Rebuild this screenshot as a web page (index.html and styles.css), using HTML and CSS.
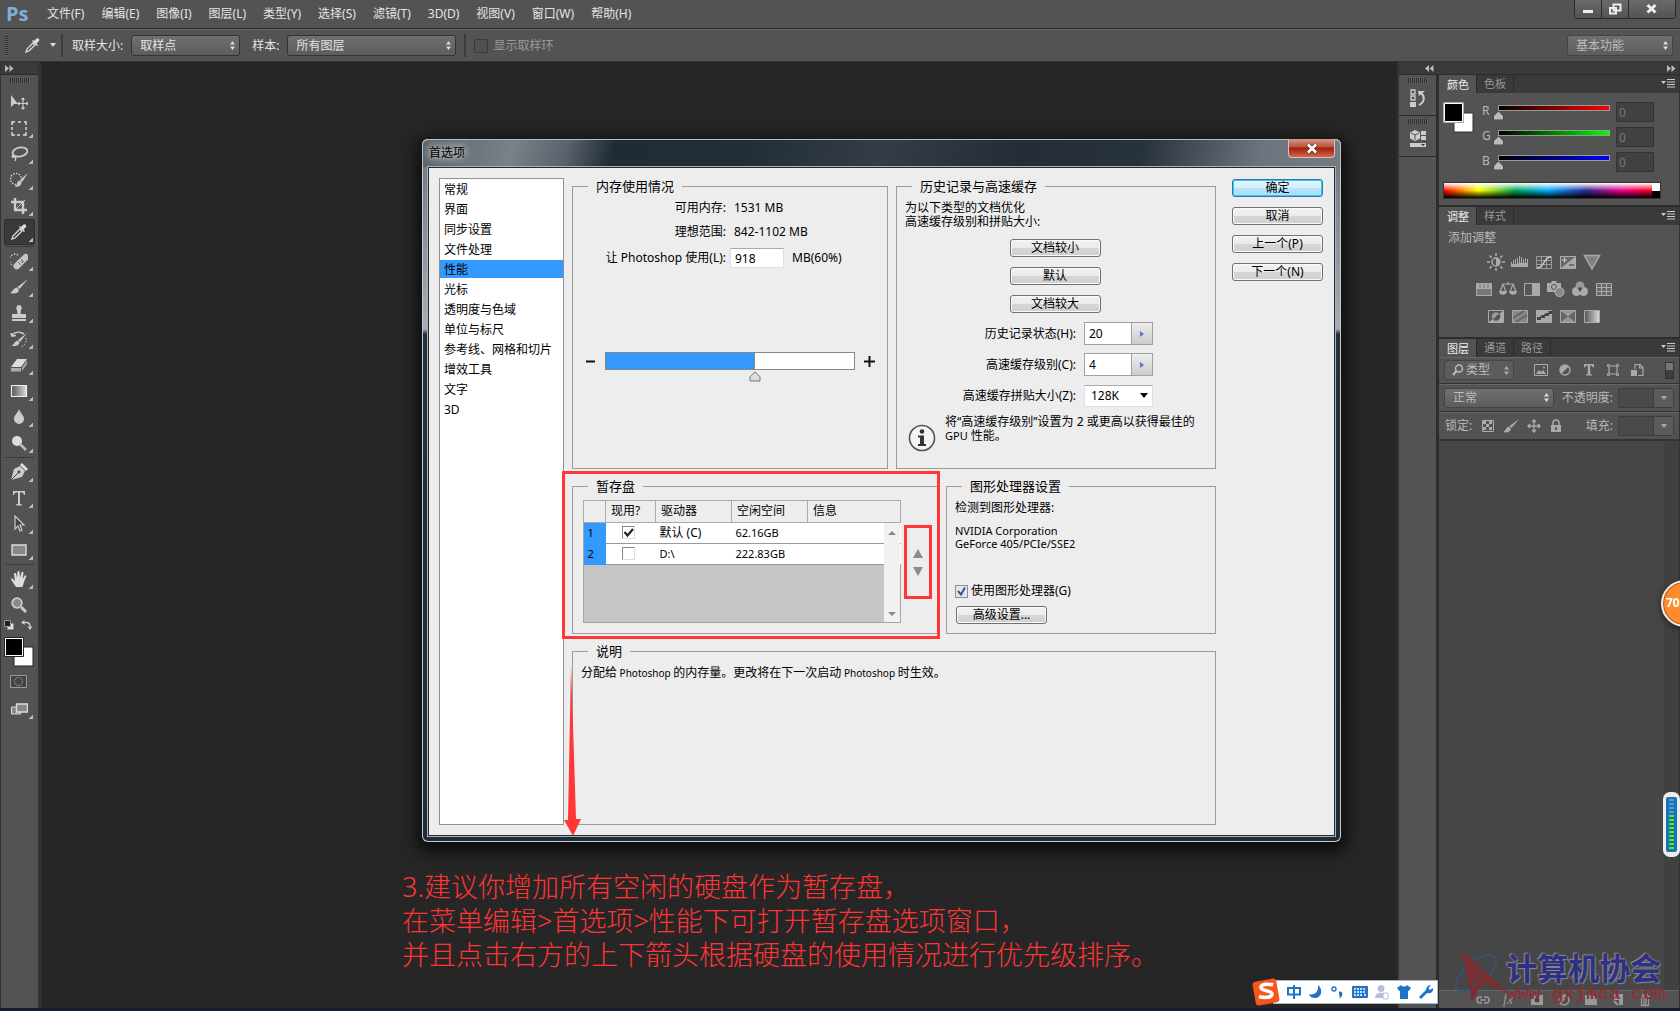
FILE: index.html
```html
<!DOCTYPE html>
<html lang="zh-CN">
<head>
<meta charset="utf-8">
<title>首选项</title>
<link rel="stylesheet" href="styles.css">
</head>
<body>
<div class="app">
  <header class="menubar">
    <span class="brand">Ps</span>
    <nav class="menus">
      <button>文件(F)</button><button>编辑(E)</button><button>图像(I)</button><button>图层(L)</button><button>类型(Y)</button><button>选择(S)</button><button>滤镜(T)</button><button>3D(D)</button><button>视图(V)</button><button>窗口(W)</button><button>帮助(H)</button>
    </nav>
    <div class="winctl">
      <button aria-label="最小化"><svg width="12" height="12"><path d="M1 7h10v3H1z" fill="#eee"/></svg></button>
      <button aria-label="还原"><svg width="14" height="12"><path d="M5.500 1.500h7v6h-7z M2 5h6v5.500H2z" fill="#5a5a5a" stroke="#eee" stroke-width="2"/></svg></button>
      <button class="wide" aria-label="关闭"><svg width="12" height="12"><path d="M1.500 2l8 7.500M9.500 2l-8 7.500" stroke="#eee" stroke-width="3"/></svg></button>
    </div>
  </header>

  <div class="optbar">
    <i class="grip-v"></i>
    <svg class="opt-tool" width="18" height="18" viewBox="0 0 18 18"><path d="M3 15l1-3 6-6 2 2-6 6z" fill="none" stroke="#ddd" stroke-width="1.300"/><path d="M9 4l5 5 1-1-1.500-1.500L16 4a1.800 1.800 0 0 0-2.500-2.500L11 4 10 3z" fill="#ddd"/></svg>
    <svg class="opt-caret" width="7" height="5"><path d="M1 0h6L4 4z" fill="#ddd"/></svg>
    <i class="vsep"></i>
    <label for="s1">取样大小:</label>
    <select id="s1" class="sel sel-size"><option>取样点</option></select>
    <label for="s2">样本:</label>
    <select id="s2" class="sel sel-layers"><option>所有图层</option></select>
    <i class="vsep"></i>
    <label class="ring"><input type="checkbox" class="darkcheck">显示取样环</label>
    <select class="sel sel-ws" aria-label="工作区"><option>基本功能</option></select>
  </div>

  <div class="work">
    <aside class="toolbar">
      <div class="strip"><svg width="9" height="7"><path d="M0 0l4 3.500L0 7zM4.500 0l4 3.500-4 3.500z" fill="#bbb"/></svg></div>
      <i class="grip"></i>
      <div class="tools">
        <button class="tool" aria-label="移动"><svg viewBox="0 0 18 18"><path d="M1 2v12l3-3h4z" fill="#ccc"/><path d="M13 5v11M8 10.500h10M11.500 6.500L13 5l1.500 1.500M11.500 14.500L13 16l1.500-1.500M9.500 9L8 10.500 9.500 12M16.500 9l1.500 1.500-1.500 1.500" fill="none" stroke="#ccc" stroke-width="1.200"/></svg></button>
        <button class="tool more" aria-label="选框"><svg viewBox="0 0 18 18"><path d="M2 6V3h3M8 3h3M14 3h2v3M16 8v3M16 13v3h-3M10 16H7M5 16H2v-3M2 11V8" fill="none" stroke="#ddd" stroke-width="1.400"/></svg></button>
        <button class="tool more" aria-label="套索"><svg viewBox="0 0 18 18"><ellipse cx="10" cy="7" rx="7.500" ry="4.500" transform="rotate(-12 10 7)" fill="none" stroke="#ccc" stroke-width="1.800"/><path d="M4 10c-3 1-2 3 0 2s2 2 1 4" fill="none" stroke="#ccc" stroke-width="1.400"/></svg></button>
        <button class="tool more" aria-label="快速选择"><svg viewBox="0 0 18 18"><circle cx="6" cy="8" r="5.500" fill="none" stroke="#ddd" stroke-width="1.400" stroke-dasharray="1.300 1.500"/><path d="M18 2l-6 9-2-2zM9.500 9.500l2 2c0 3-3 5-7 4 3-1 2-5 5-6z" fill="#ccc"/></svg></button>
        <button class="tool more" aria-label="裁剪"><svg viewBox="0 0 18 18"><path d="M5 1v12h12M1 5h12v12" fill="none" stroke="#ccc" stroke-width="2.400"/><path d="M5 13L15 3" stroke="#ccc" stroke-width="1"/></svg></button>
        <button class="tool more on" aria-label="吸管"><svg viewBox="0 0 18 18"><path d="M2 16l1-3 7-7 2 2-7 7z" fill="none" stroke="#ddd" stroke-width="1.300"/><path d="M9 4l5 5 1-1-1.500-1.500L16 4a1.800 1.800 0 0 0-2.500-2.500L11 4 10 3z" fill="#ddd"/></svg></button>
        <hr>
        <button class="tool more" aria-label="修复画笔"><svg viewBox="0 0 18 18"><path d="M8 3a5.500 5.500 0 0 0-6 10" fill="none" stroke="#ddd" stroke-width="1.400" stroke-dasharray="1.300 1.500"/><rect x="1.500" y="6.500" width="19" height="6.500" rx="3.200" transform="rotate(-45 11 9.500)" fill="#c6c6c6"/><path d="M8 10l3 3M11 7l3 3" stroke="#777"/><path d="M10.500 10h1M11.500 8.500h1M12 10.500h1" stroke="#555"/></svg></button>
        <button class="tool more" aria-label="画笔"><svg viewBox="0 0 18 18"><path d="M18 1L9.500 11 7.500 9zM7 9.500l2 2.500c-1 4-5 4-9 3 3-1 3-5 7-5.500z" fill="#ccc"/></svg></button>
        <button class="tool more" aria-label="图章"><svg viewBox="0 0 18 18"><path d="M9 1a3 3 0 0 1 2 5l-.5 4H16v4H2v-4h5.500L7 6a3 3 0 0 1 2-5zM2 15h14v2H2z" fill="#ccc"/></svg></button>
        <button class="tool more" aria-label="历史记录画笔"><svg viewBox="0 0 18 18"><path d="M2 5c4-4 9-3 12-1M1 3l1 3 4-.5" fill="none" stroke="#ccc" stroke-width="1.600"/><path d="M17 3l-7 9-2-2zM7.500 10.500l2 2c-1 4-5 4-8 3 3-1 3-4 6-5z" fill="#ccc"/><path d="M16 8c1 4-1 7-5 9" fill="none" stroke="#ccc" stroke-dasharray="1.500 1.500"/></svg></button>
        <button class="tool more" aria-label="橡皮擦"><svg viewBox="0 0 18 18"><path d="M7 3h10l-6 8H1z" fill="#ddd"/><path d="M1 12h10v3.500H1zM12 11.500l5-7V8l-5 7z" fill="#aaa"/></svg></button>
        <button class="tool more" aria-label="渐变"><svg viewBox="0 0 18 18"><defs><linearGradient id="g"><stop stop-color="#555"/><stop offset="1" stop-color="#ddd"/></linearGradient></defs><path d="M1.500 3.500h15v11h-15z" fill="url(#g)" stroke="#eee" stroke-width="1.200"/></svg></button>
        <button class="tool more" aria-label="模糊"><svg viewBox="0 0 18 18"><path d="M9 1c1 4 5 6 5 10a5 5 0 0 1-10 0c0-4 4-6 5-10z" fill="#ccc"/></svg></button>
        <button class="tool more" aria-label="减淡"><svg viewBox="0 0 18 18"><circle cx="7" cy="7" r="5" fill="#ddd"/><path d="M10 10l6 6" stroke="#bbb" stroke-width="2.600"/></svg></button>
        <hr>
        <button class="tool more" aria-label="钢笔"><svg viewBox="0 0 18 18"><path d="M12 0l6 6-2 2-6-6z" fill="#ddd"/><path d="M10 3l5 5-3 6-11 3 3-11z" fill="#ccc"/><path d="M1 17l7-7" stroke="#444"/><circle cx="9" cy="9" r="1.400" fill="#444"/></svg></button>
        <button class="tool more" aria-label="文字"><svg viewBox="0 0 18 18"><path d="M3 2h12v4h-1c-.5-2-1-2.500-4-2.500V15l2 .5v1H6v-1L8 15V3.500C5 3.500 4.500 4 4 6H3z" fill="#ccc"/></svg></button>
        <button class="tool more" aria-label="路径选择"><svg viewBox="0 0 18 18"><path d="M5 1v13l3-3 2 5 2-1-2-5h4z" fill="#444" stroke="#ccc" stroke-width="1.200"/></svg></button>
        <button class="tool more" aria-label="矩形"><svg viewBox="0 0 18 18"><path d="M2 4h14v10H2z" fill="#888" stroke="#ddd" stroke-width="1.400"/></svg></button>
        <hr>
        <button class="tool more" aria-label="抓手"><svg viewBox="0 0 18 18"><path d="M6 17L1 9.500c0-1.500 1.500-1.500 2.500 0L5 11 4 4c0-1.500 2-1.500 2.200 0L7 8l.5-6c0-1.500 2-1.500 2 0L10 8l1.500-5.500c.5-1.300 2-1 2 .5L12.500 9l2-3c1-1.200 2-.5 1.700.5L14 12l-1.500 5z" fill="#ddd"/></svg></button>
        <button class="tool" aria-label="缩放"><svg viewBox="0 0 18 18"><circle cx="7" cy="7" r="4.800" fill="#888" stroke="#ccc" stroke-width="1.800"/><path d="M11 11l5 5" stroke="#ccc" stroke-width="3"/></svg></button>
      </div>
      <div class="mini"><svg width="10" height="10"><path d="M3.500 3.500h6v6h-6z" fill="#ddd"/><path d="M.5.5h6v6h-6z" fill="#222" stroke="#999"/></svg><svg width="11" height="11"><path d="M3 2.500h2c3 0 4 1 4 4" fill="none" stroke="#ccc" stroke-width="1.500"/><path d="M0 2.500L3.500 0v5zM6.500 6.500h5L9 10z" fill="#ccc"/></svg></div>
      <svg class="fgbg" width="30" height="30"><path d="M10 10h19v19H10z" fill="#fff" stroke="#222"/><path d="M.5.5h19v19H.5z" fill="#fff" stroke="#222"/><path d="M2 2h16v16H2z"/></svg>
      <svg class="mask" width="18" height="14"><path d="M.5.5h16v12H.5z" fill="#444" stroke="#999"/><circle cx="8.500" cy="6.500" r="4" fill="none" stroke="#bbb" stroke-dasharray="1 1"/></svg>
      <button class="tool more" aria-label="屏幕模式"><svg viewBox="0 0 18 18"><path d="M1.500 7h9v7h-9z" fill="#888" stroke="#ddd"/><path d="M6.500 4h11v8h-11z" fill="#888" stroke="#ddd" stroke-width="1.400"/></svg></button>
    </aside>

    <main class="canvas"></main>

    <aside class="dock">
      <div class="strip split"><svg width="9" height="7"><path d="M4 0L0 3.500 4 7zM8.500 0l-4 3.500 4 3.500z" fill="#bbb"/></svg><svg width="9" height="7"><path d="M0 0l4 3.500L0 7zM4.500 0l4 3.500-4 3.500z" fill="#bbb"/></svg></div>
      <div class="dockcols">
        <div class="iconcol">
          <div class="iconcell"><i class="grip"></i><svg width="16" height="18"><path d="M1 1h4v4H1zM1 7h4v4H1z" fill="none" stroke="#ccc" stroke-width="1.300"/><path d="M0 13h6v5H0zM8 2h7l-6 5z" fill="#ccc"/><path d="M11 4c4 3 4 9-2 12" fill="none" stroke="#ccc" stroke-width="2"/></svg></div>
          <div class="iconcell"><i class="grip"></i><svg width="16" height="18"><path d="M5 0l5 2.500v6L5 11 0 8.500v-6z" fill="#ccc"/><path d="M1 3l4 2 4-2M5 5v5" fill="none" stroke="#555"/><path d="M11 1h5v4h-5zM11 6h5v4h-5zM0 13h16v4H0z" fill="#ccc"/><path d="M11 14h4l-2 2z" fill="#333"/></svg></div>
        </div>
        <div class="panels">
          <section class="panel">
            <div class="tabs"><button class="tab on">颜色</button><button class="tab">色板</button><svg class="pm" width="14" height="9"><path d="M0 2h5L2.500 5z" fill="#ccc"/><path d="M6 .5h8M6 3h8M6 5.500h8M6 8h8" stroke="#ccc"/></svg></div>
            <div class="color">
              <svg width="31" height="31"><path d="M11 11h19v19H11z" fill="#fff" stroke="#333"/><path d="M.5.5h20v20H.5z" stroke="#aaa"/><path d="M1.500 1.500h18v18h-18z" stroke="#fff"/></svg>
              <div class="rgb">
                <div class="ch"><label for="r">R</label><span class="track"><i class="red"></i><svg width="11" height="9"><path d="M5.500 0L10.500 5v4H.5V5z" fill="#bbb" stroke="#444"/></svg></span><input id="r" value="0"></div>
                <div class="ch"><label for="gg">G</label><span class="track"><i class="green"></i><svg width="11" height="9"><path d="M5.500 0L10.500 5v4H.5V5z" fill="#bbb" stroke="#444"/></svg></span><input id="gg" value="0"></div>
                <div class="ch"><label for="b">B</label><span class="track"><i class="blue"></i><svg width="11" height="9"><path d="M5.500 0L10.500 5v4H.5V5z" fill="#bbb" stroke="#444"/></svg></span><input id="b" value="0"></div>
              </div>
            </div>
            <div class="spectrum"><i></i></div>
          </section>

          <section class="panel">
            <div class="tabs"><button class="tab on">调整</button><button class="tab">样式</button><svg class="pm" width="14" height="9"><path d="M0 2h5L2.500 5z" fill="#ccc"/><path d="M6 .5h8M6 3h8M6 5.500h8M6 8h8" stroke="#ccc"/></svg></div>
            <div class="adj">
              <p>添加调整</p>
              <div class="adjrow">
                <svg width="18" height="18"><circle cx="9" cy="9" r="4" fill="none" stroke="#aaa" stroke-width="1.500"/><path d="M9 5a4 4 0 0 1 0 8z" fill="#aaa"/><path d="M9 0v3M9 15v3M0 9h3M15 9h3M2.600 2.600l2 2M13.400 13.400l2 2M2.600 15.400l2-2M13.400 4.600l2-2" stroke="#aaa" stroke-width="1.600"/></svg>
                <svg width="18" height="18"><path d="M0 9h1v2h1V7h1v4h1V6h1v5h1V5h1v5h1V3h1v7h1V4h1v6h1V6h1v4h1V5h1v5h1V6h1v8H0z" fill="#aaa"/></svg>
                <svg width="18" height="18"><path d="M1.500 3.500h15v12h-15zM6.500 3v12M11.500 3v12M1 7.500h15M1 11.500h15" fill="none" stroke="#999"/><path d="M2 15c8 0 6-11 14-11" fill="none" stroke="#ccc" stroke-width="1.500"/></svg>
                <svg width="18" height="18"><path d="M1 3h16v13H1z" fill="#aaa"/><path d="M2 15V4h14z" fill="#666"/><path d="M3 7h5M5.500 4.500v5" stroke="#ccc"/><path d="M10 12h5" stroke="#333"/></svg>
                <svg width="18" height="18"><path d="M1.500 2.500h15L9 16z" fill="#808080" stroke="#aaa" stroke-width="1.500"/></svg>
              </div>
              <div class="adjrow">
                <svg width="18" height="18"><path d="M1.500 3.500h15v12h-15z" fill="#777" stroke="#aaa"/><path d="M2 4h14v5H2z" fill="#aaa"/><path d="M5 4v4M9 4v4M13 4v4" stroke="#777"/></svg>
                <svg width="18" height="18"><path d="M3 4h12M9 2v3M4 4l-3 8M4 4l3 8M14 4l-3 8M14 4l3 8" fill="none" stroke="#aaa" stroke-width="1.200"/><path d="M0 11h8c0 5-8 5-8 0zM10 11h8c0 5-8 5-8 0z" fill="#aaa"/></svg>
                <svg width="18" height="18"><path d="M1.500 3.500h15v12h-15z" fill="#555" stroke="#aaa"/><path d="M9 4h7v11H9z" fill="#aaa"/></svg>
                <svg width="18" height="18"><path d="M0 3h4l1-2h4l1 2h4v9H0z" fill="#aaa"/><circle cx="7" cy="7" r="2.500" fill="none" stroke="#555"/><circle cx="12.500" cy="12" r="4.500" fill="#888" stroke="#bbb"/></svg>
                <svg width="18" height="18"><circle cx="9" cy="6" r="4.500" fill="#999"/><circle cx="5.500" cy="11.500" r="4.500" fill="#aaa"/><circle cx="12.500" cy="11.500" r="4.500" fill="#aaa"/><path d="M9 12l-2.500-4.500h5z" fill="#444"/></svg>
                <svg width="18" height="18"><path d="M1.500 3.500h15v12h-15zM6.500 3v12M11.500 3v12M1 7.500h15M1 11.500h15" fill="#666" stroke="#aaa"/></svg>
              </div>
              <div class="adjrow">
                <svg width="18" height="18"><path d="M1.500 3.500h15v12h-15z" fill="#555" stroke="#aaa"/><path d="M2 15L16 4v11z" fill="#aaa"/><circle cx="9" cy="9.500" r="4.200" fill="#999"/><path d="M6 12.500l6-6a4.200 4.200 0 0 1-6 6z" fill="#555"/></svg>
                <svg width="18" height="18"><path d="M1.500 3.500h15v12h-15z" fill="#888" stroke="#aaa"/><path d="M2 11l11-7M5 15l11-7" stroke="#666" stroke-width="2"/></svg>
                <svg width="18" height="18"><path d="M1.500 3.500h15v12h-15z" fill="#aaa" stroke="#aaa"/><path d="M2 10h3V8h4V6h4V4h4v3h-3v2h-4v2H6v2H2z" fill="#444"/><path d="M3 9h3V7h4V5h4" fill="none" stroke="#aaa"/></svg>
                <svg width="18" height="18"><path d="M1.500 3.500h15v12h-15z" fill="#999" stroke="#aaa"/><path d="M2 4l7 5.500L2 15zM16 4L9 9.500l7 5.500z" fill="#666"/></svg>
                <svg width="18" height="18"><path d="M1.500 3.500h15v12h-15z" fill="url(#g)" stroke="#aaa"/></svg>
              </div>
            </div>
          </section>

          <section class="panel layers">
            <div class="tabs"><button class="tab on">图层</button><button class="tab">通道</button><button class="tab">路径</button><svg class="pm" width="14" height="9"><path d="M0 2h5L2.500 5z" fill="#ccc"/><path d="M6 .5h8M6 3h8M6 5.500h8M6 8h8" stroke="#ccc"/></svg></div>
            <div class="lrow filter">
              <select class="sel sel-kind" aria-label="筛选"><option>类型</option></select>
              <div class="ficons">
                <svg width="14" height="14"><path d="M.5 1.500h13v11H.5z" fill="none" stroke="#aaa"/><path d="M2 11l3-4 2 2 2-2 3 4z" fill="#aaa"/><circle cx="10" cy="4.500" r="1" fill="#aaa"/></svg>
                <svg width="14" height="14"><circle cx="7" cy="7" r="5" fill="none" stroke="#aaa" stroke-width="1.400"/><path d="M10.500 3.500a5 5 0 0 0-7 7z" fill="#aaa"/></svg>
                <svg width="14" height="14"><path d="M2 1h10v3.500h-1C10.500 3 10 2.500 8.200 2.500V11l1.800.5v1H4v-1l1.800-.5V2.500C4 2.500 3.500 3 3 4.500H2z" fill="#aaa"/></svg>
                <svg width="14" height="14"><path d="M3 3h8v8H3z" fill="none" stroke="#aaa" stroke-width="1.200"/><path d="M1.500 1.500h2v2h-2zM10.500 1.500h2v2h-2zM1.500 10.500h2v2h-2zM10.500 10.500h2v2h-2z" fill="#555" stroke="#aaa"/></svg>
                <svg width="14" height="14"><path d="M5 1.500h5l3 3v8H8M5 1v5M9.500 2v3H13" fill="none" stroke="#aaa" stroke-width="1.200"/><path d="M1 7h6v6H1z" fill="#aaa"/></svg>
              </div>
              <i class="toggle"></i>
            </div>
            <div class="lrow">
              <select class="sel sel-mode" aria-label="混合模式"><option>正常</option></select>
              <label for="op">不透明度:</label><span class="combo"><input id="op"><button aria-label="不透明度"></button></span>
            </div>
            <div class="lrow">
              <span class="lk">锁定:</span>
              <div class="locks">
                <svg width="14" height="14"><path d="M1.500 1.500h11v11h-11z" fill="#555" stroke="#aaa"/><path d="M2 2h3v3H2zM8 2h3v3H8zM5 5h3v3H5zM2 8h3v3H2zM8 8h3v3H8z" fill="#aaa"/></svg>
                <svg width="16" height="14"><path d="M16 0L8.500 9l-2-2zM6 7.500L8 10c-1 3-4 4-8 3 3-1 3-5 6-5.500z" fill="#aaa"/></svg>
                <svg width="14" height="14"><path d="M7 1v12M1 7h12M5 3l2-2 2 2M5 11l2 2 2-2M3 5L1 7l2 2M11 5l2 2-2 2" fill="none" stroke="#aaa" stroke-width="1.300"/></svg>
                <svg width="14" height="14"><path d="M2 6h10v7H2z" fill="#aaa"/><path d="M4 6V4c0-4 6-4 6 0v2" fill="none" stroke="#aaa" stroke-width="1.500"/><path d="M7 8v3" stroke="#444" stroke-width="1.500"/></svg>
              </div>
              <label for="fi">填充:</label><span class="combo"><input id="fi"><button aria-label="填充"></button></span>
            </div>
            <div class="llist"><i></i></div>
            <div class="lfoot">
              <svg width="14" height="14"><path d="M6 4H4a3 3 0 0 0 0 6h2M8 4h2a3 3 0 0 1 0 6H8M4 7h6" fill="none" stroke="#999" stroke-width="1.600"/></svg>
              <em>fx</em>
              <svg width="14" height="14"><path d="M1 2h12v10H1z" fill="#999"/><circle cx="7" cy="7" r="2.500" fill="#444"/></svg>
              <svg width="14" height="14"><circle cx="7" cy="7" r="5" fill="none" stroke="#999" stroke-width="1.500"/><path d="M10.500 3.500a5 5 0 0 0-7 7z" fill="#999"/></svg>
              <svg width="14" height="14"><path d="M1 2h5l1 1h6v9H1z" fill="#999"/></svg>
              <svg width="14" height="14"><path d="M3 1h9v11H8V7H3z" fill="#999"/><path d="M3 8l4 4" stroke="#999" stroke-width="2"/></svg>
              <svg width="14" height="14"><path d="M2 3.500h10M5 3V1.500h4V3M3.500 5v7.500h7V5M6 5v7M8 5v7" fill="none" stroke="#999" stroke-width="1.300"/></svg>
            </div>
          </section>
        </div>
      </div>
    </aside>
  </div>
  <footer class="edge"></footer>
</div>

<div class="dialog" role="dialog" aria-labelledby="dt">
  <div class="titlebar"><h1 id="dt">首选项</h1><button class="close" aria-label="关闭"><svg width="12" height="11"><path d="M2 1.500l8 8M10 1.500l-8 8" stroke="#633" stroke-width="4"/><path d="M2 1.500l8 8M10 1.500l-8 8" stroke="#fff" stroke-width="2.600"/></svg></button></div>
  <div class="client">
    <ul class="cats"><li>常规</li><li>界面</li><li>同步设置</li><li>文件处理</li><li class="on">性能</li><li>光标</li><li>透明度与色域</li><li>单位与标尺</li><li>参考线、网格和切片</li><li>增效工具</li><li>文字</li><li>3D</li></ul>
    <div class="groups">
      <div class="grow first">
        <fieldset class="mem"><legend>内存使用情况</legend>
          <div class="mrow"><span>可用内存:</span><b>1531 MB</b></div>
          <div class="mrow"><span>理想范围:</span><b>842-1102 MB</b></div>
          <div class="mrow use"><label for="mb">让 Photoshop 使用(L):</label><input id="mb" value="918"><span class="unit">MB(60%)</span></div>
          <div class="slide"><svg width="11" height="11"><path d="M1 5.500h9" stroke="#111" stroke-width="2"/></svg>
            <div class="bar"><i style="width:60%"></i><svg width="12" height="11"><path d="M6 .8l5 5V10H1V5.800z" fill="#ddd" stroke="#777"/></svg></div>
            <svg width="11" height="11"><path d="M0 5.500h11M5.500 0v11" stroke="#111" stroke-width="2"/></svg></div>
        </fieldset>
        <fieldset class="hist"><legend>历史记录与高速缓存</legend>
          <p class="lead">为以下类型的文档优化<br>高速缓存级别和拼贴大小:</p>
          <div class="presets"><button class="btn">文档较小</button><button class="btn">默认</button><button class="btn">文档较大</button></div>
          <div class="hrow"><label for="hs">历史记录状态(H):</label><span class="step"><input id="hs" value="20"><button aria-label="状态"></button></span></div>
          <div class="hrow"><label for="hc">高速缓存级别(C):</label><span class="step"><input id="hc" value="4"><button aria-label="级别"></button></span></div>
          <div class="hrow"><label for="ht">高速缓存拼贴大小(Z):</label><select id="ht"><option>128K</option></select></div>
          <div class="info"><svg width="28" height="28"><circle cx="14" cy="14" r="12.500" fill="#f4f4f4" stroke="#555" stroke-width="1.600"/><circle cx="14" cy="7.500" r="2.300" fill="#333"/><path d="M10 11.500h6V20h2v2h-8v-2h2v-6.500h-2z" fill="#333"/></svg><p>将“高速缓存级别”设置为 2 或更高以获得最佳的<br><small>GPU</small> 性能。</p></div>
        </fieldset>
      </div>
      <div class="grow second">
        <fieldset class="scratch"><legend>暂存盘</legend>
          <div class="disk">
            <div class="tablebox">
              <table>
                <colgroup><col class="c0"><col class="c1"><col class="c2"><col class="c3"><col></colgroup>
                <thead><tr><th></th><th>现用?</th><th>驱动器</th><th>空闲空间</th><th>信息</th></tr></thead>
                <tbody>
                  <tr><td class="n">1</td><td class="ck"><input type="checkbox" checked aria-label="默认 (C)"></td><td>默认 (C)</td><td><small>62.16GB</small></td><td></td></tr>
                  <tr><td class="n">2</td><td class="ck"><input type="checkbox" aria-label="D:\"></td><td><small>D:\</small></td><td><small>222.83GB</small></td><td></td></tr>
                </tbody>
              </table>
              <div class="sbar"><svg width="8" height="4"><path d="M0 4l4-4 4 4z" fill="#888"/></svg><svg width="8" height="4"><path d="M0 0h8L4 4z" fill="#888"/></svg></div>
            </div>
            <div class="order"><button aria-label="上移"><svg width="10" height="9"><path d="M0 9l5-9 5 9z" fill="#8c8c8c"/></svg></button><button aria-label="下移"><svg width="10" height="9"><path d="M0 0h10L5 9z" fill="#8c8c8c"/></svg></button></div>
          </div>
        </fieldset>
        <fieldset class="gpu"><legend>图形处理器设置</legend>
          <p>检测到图形处理器:</p>
          <p class="card">NVIDIA Corporation<br>GeForce 405/PCIe/SSE2</p>
          <label class="usegpu"><input type="checkbox" checked>使用图形处理器(G)</label>
          <button class="btn">高级设置...</button>
        </fieldset>
      </div>
      <fieldset class="desc"><legend>说明</legend><p>分配给<small> Photoshop </small>的内存量。更改将在下一次启动<small> Photoshop </small>时生效。</p></fieldset>
    </div>
    <div class="actions"><button class="btn ok">确定</button><button class="btn">取消</button><button class="btn">上一个(P)</button><button class="btn">下一个(N)</button></div>
  </div>
  <i class="mark outer"></i>
  <svg class="arrow" width="17" height="171"><path d="M7 0l2 60 3 94h5l-8 17-9-16h4z" fill="#ff3737"/></svg>
</div>

<p class="note">3.建议你增加所有空闲的硬盘作为暂存盘，<br>在菜单编辑&gt;首选项&gt;性能下可打开暂存盘选项窗口，<br>并且点击右方的上下箭头根据硬盘的使用情况进行优先级排序。</p>

<div class="ball">70</div>
<div class="meter"><i></i></div>

<div class="ime">
  <svg class="sogou" width="30" height="30" viewBox="0 0 30 30"><rect x="3" y="3" width="24" height="24" rx="3" transform="rotate(-10 15 15)" fill="#f8551c"/><path d="M22 8c-5-1.500-12-1-12 2.500 0 4 11 2.500 11 6.500 0 4-8 4-13 2.500" fill="none" stroke="#fff" stroke-width="3.600"/></svg>
  <svg width="16" height="16"><path d="M2 4h12v6.500H2zM8 1v14" fill="none" stroke="#1f74c8" stroke-width="2"/></svg>
  <svg width="16" height="16"><path d="M10 1c6 5 3 13-3 13-3 0-5-1-6-4 5 2 10-2 9-9z" fill="#1f74c8"/></svg>
  <svg width="16" height="16"><circle cx="4" cy="5" r="2" fill="none" stroke="#1f74c8" stroke-width="1.400"/><path d="M9 8c4-2 5 4 0 7 1-2 1-3 0-4z" fill="#1f74c8"/></svg>
  <svg width="16" height="16"><rect y="2" width="16" height="12" rx="1" fill="#1f74c8"/><path d="M2 5h12M2 8h12M2 11h2M5 11h6M12 11h2" stroke="#fff" stroke-width="1.500" stroke-dasharray="2 1"/></svg>
  <svg width="16" height="16"><circle cx="7" cy="4.500" r="3.500" fill="#b5c0d8"/><path d="M1 14c0-7 12-7 12 0z" fill="#b5c0d8"/><path d="M9 9h5v6H9z" fill="#fff" stroke="#b5c0d8"/></svg>
  <svg width="16" height="16"><path d="M5 1c1 2 5 2 6 0l4 3-2 3-1-.5V15H4V6.500L3 7 1 4z" fill="#1f74c8"/></svg>
  <svg width="16" height="16"><path d="M2 14l7-7" stroke="#1f74c8" stroke-width="3"/><path d="M13 1l-2.500 3 1.500 2 3-2c1 4-3 6-6 5-2-2-1-8 4-8z" fill="#1f74c8"/></svg>
</div>

<div class="wm">
  <svg width="56" height="56" viewBox="0 0 56 56"><ellipse cx="23" cy="24" rx="25" ry="11" transform="rotate(-40 23 24)" fill="none" stroke="#35547a" stroke-width="1.500"/><path d="M9 1l45 42-25-9-10 19-2-12z" fill="#7a2e31"/><path d="M17 42l13-20" stroke="#484848" stroke-width="2"/></svg>
  <div><strong>计算机协会</strong><a href="#">www.gxjmca.com</a></div>
</div>
</body>
</html>
```
FILE: styles.css
```css
* { box-sizing: border-box; }
body {
  margin: 0;
  height: 100vh;
  position: relative;
  overflow: hidden;
  background: #262626;
  color: #e4e4e4;
  font: 12px/16px "Noto Sans", "Noto Sans CJK SC", sans-serif;
}
button, input, select { font: inherit; color: inherit; margin: 0; }
button { padding: 0; border: 0; background: none; }
p, h1, ul { margin: 0; padding: 0; }
svg { display: block; flex: none; }
small { font-size: 11px; }

.app { display: grid; grid-template-rows: 29px 33px 1fr 3px; height: 100vh; }
.menubar { display: flex; align-items: center; background: #535353; border-bottom: 1px solid #2b2b2b; }
.brand { width: 39px; padding-left: 6px; color: #83acdb; font: bold 20px/24px "Open Sans", sans-serif; }
.menus { display: flex; flex: 1; gap: 17px; padding-left: 8px; }
.winctl { align-self: flex-start; display: flex; margin-right: 4px; border: 1px solid #2b2b2b; border-top: 0; border-radius: 0 0 3px 3px; }
.winctl button { display: grid; place-items: center; width: 27px; height: 18px; background: linear-gradient(#6a6a6a, #535353); border-right: 1px solid #2b2b2b; }
.winctl .wide { width: 46px; border-right: 0; }

.optbar { display: flex; align-items: center; background: #535353; border-top: 1px solid #646464; border-bottom: 1px solid #333; padding: 0 7px 0 5px; }
.grip-v { width: 3px; height: 20px; background: repeating-linear-gradient(#2d2d2d 0 1px, #606060 1px 2px); }
.opt-tool { margin-left: 15px; }
.opt-caret { margin: 0 5px 0 8px; }
.vsep { width: 2px; height: 23px; background: #3d3d3d; }
.optbar label { margin: 0 8px 0 9px; }
.sel {
  appearance: none; height: 21px; padding: 0 8px; border: 1px solid #333; border-radius: 3px;
  background: url("data:image/svg+xml,%3Csvg xmlns='http://www.w3.org/2000/svg' width='5' height='9'%3E%3Cpath d='M0 3.500L2.500 0 5 3.500zM0 5.500h5L2.500 9z' fill='%23ddd'/%3E%3C/svg%3E") no-repeat right 4px center, linear-gradient(#707070, #5c5c5c);
}
.sel-size { width: 109px; margin-right: 3px; }
.sel-layers { width: 169px; margin-right: 8px; }
.sel-ws { width: 106px; margin-left: auto; color: #bbb; background-color: #5a5a5a; border-color: #444; }
.optbar .ring { display: flex; align-items: center; gap: 5px; margin-left: 8px; color: #9a9a9a; }
.darkcheck { appearance: none; width: 14px; height: 14px; border: 1px solid #3a3a3a; border-radius: 2px; background: #505050; }

.work { display: grid; grid-template-columns: 41px 1fr 283px; min-height: 0; }
.strip { height: 13px; background: #3a3a3a; border-bottom: 1px solid #2b2b2b; display: flex; align-items: center; padding-left: 4px; }
.strip.split { justify-content: space-between; padding: 0 3px 0 26px; }
.toolbar { display: flex; flex-direction: column; background: #535353; border-left: 1px solid #333; border-right: 3px solid #333; }
.grip { width: 20px; height: 5px; background: repeating-linear-gradient(90deg, #2d2d2d 0 1px, #606060 1px 2px); }
.toolbar .grip { margin: 3px 0 6px 9px; }
.tools { display: flex; flex-direction: column; }
.tool { position: relative; display: grid; place-items: center; width: 31px; height: 26px; margin-left: 3px; padding-right: 2px; }
.tool svg { width: 18px; height: 18px; }
.tool.more::after { content: ""; position: absolute; right: 2px; bottom: 3px; width: 4px; height: 4px; background: linear-gradient(135deg, transparent 50%, #bbb 50%); }
.tool.on { background: #3a3a3a; border-radius: 3px; box-shadow: inset 0 0 0 1px #2d2d2d; }
.tools hr { width: 29px; height: 1px; margin: 1px 0 1px 4px; border: 0; background: #393939; }
.mini { display: flex; align-items: center; gap: 7px; height: 14px; padding-left: 3px; }
.fgbg { margin: 5px 0 8px 3px; }
.mask { margin: 0 0 7px 9px; }

.dock { display: flex; flex-direction: column; min-height: 0; border-left: 2px solid #333; border-right: 1px solid #333; }
.dockcols { flex: 1; display: grid; grid-template-columns: 37px 1fr; gap: 3px; background: #2d2d2d; min-height: 0; }
.iconcol { background: #535353; }
.iconcell { display: flex; flex-direction: column; align-items: center; gap: 6px; height: 41px; padding-top: 3px; border-bottom: 1px solid #2d2d2d; }
.panels { display: flex; flex-direction: column; gap: 2px; min-height: 0; }
.panel { background: #535353; color: #b8b8b8; }
.tabs { display: flex; height: 18px; background: #3a3a3a; }
.tab { height: 17px; padding: 0 7px; line-height: 17px; color: #989898; border-right: 1px solid #2b2b2b; font-size: 11px; }
.tab.on { height: 18px; padding: 0 7px 0 8px; background: #535353; color: #eee; }
.pm { margin: 4px 4px 0 auto; }
.color { display: flex; gap: 8px; height: 89px; padding: 9px 25px 0 4px; }
.rgb { flex: 1; }
.ch { display: flex; height: 25px; gap: 6px; }
.ch label { width: 10px; line-height: 18px; }
.track { flex: 1; padding-top: 3px; }
.track i { display: block; height: 6px; border: 1px solid #999; }
.track svg { margin-left: -5px; }
.red { background: linear-gradient(90deg, #000, #f00); }
.green { background: linear-gradient(90deg, #000, #0f0); }
.blue { background: linear-gradient(90deg, #000, #00f); }
.ch input { width: 38px; height: 20px; padding: 0 2px; border: 1px solid #333; background: #414141; color: #777; }
.spectrum { display: flex; justify-content: flex-end; height: 17px; margin: 0 18px 6px 4px; border: 1px solid #333; background: linear-gradient(#fff, transparent 50%, #000), linear-gradient(90deg, red, yellow 16%, #00a550 33%, #00aeff 48%, #2d2a90 66%, #ed008c 82%, red); }
.spectrum i { width: 8px; background: linear-gradient(#fff 50%, #000 50%); }
.adj { height: 112px; padding-top: 5px; display: flex; flex-direction: column; }
.adj p { padding-left: 9px; margin-bottom: 7px; }
.adjrow { display: flex; gap: 6px; height: 27px; padding-left: 48px; }
.adjrow:nth-child(3) { padding-left: 36px; }

.layers { flex: 1; display: flex; flex-direction: column; min-height: 0; }
.lrow { display: flex; align-items: center; height: 28px; padding: 0 5px 1px; border-top: 1px solid #666; border-bottom: 1px solid #333; }
.lrow.filter { height: 27px; }
.lrow .sel { background-color: #5c5c5c; color: #bbb; border-color: #444; height: 20px; }
.sel-kind { width: 70px; padding-left: 21px; background: url("data:image/svg+xml,%3Csvg xmlns='http://www.w3.org/2000/svg' width='12' height='12'%3E%3Ccircle cx='7' cy='4.500' r='3.500' fill='none' stroke='%23bbb' stroke-width='1.500'/%3E%3Cpath d='M4.500 7L1 11' stroke='%23bbb' stroke-width='2'/%3E%3C/svg%3E") no-repeat 7px center, url("data:image/svg+xml,%3Csvg xmlns='http://www.w3.org/2000/svg' width='5' height='9'%3E%3Cpath d='M0 3.500L2.500 0 5 3.500zM0 5.500h5L2.500 9z' fill='%23aaa'/%3E%3C/svg%3E") no-repeat right 4px center; }
.ficons { display: flex; gap: 10px; margin: 0 auto 0 20px; }
.toggle { width: 9px; height: 17px; border: 1px solid #333; background: linear-gradient(#777 45%, #3d3d3d 45%); }
.sel-mode { width: 110px; }
.lrow label { margin-left: auto; }
.combo { display: flex; width: 56px; height: 20px; margin-left: 5px; border: 1px solid #3d3d3d; border-radius: 0 3px 3px 0; }
.combo input { width: 35px; padding: 0; border: 0; border-right: 1px solid #3d3d3d; background: #4a4a4a; }
.combo button { flex: 1; background: url("data:image/svg+xml,%3Csvg xmlns='http://www.w3.org/2000/svg' width='6' height='4'%3E%3Cpath d='M0 0h6L3 4z' fill='%23aaa'/%3E%3C/svg%3E") no-repeat center, #5c5c5c; }
.lk { padding-left: 1px; }
.locks { display: flex; gap: 8px; margin-left: 9px; }
.llist { flex: 1; display: flex; justify-content: flex-end; background: #464646; border-top: 1px solid #333; }
.llist i { width: 15px; background: #404040; }
.lfoot { display: flex; align-items: center; gap: 13px; height: 18px; padding-left: 37px; border-top: 1px solid #666; color: #999; }
.lfoot em { width: 14px; font: italic 14px/16px "Liberation Serif", serif; }
.edge { background: #141d2c; }

.dialog { position: absolute; left: 422px; top: 139px; width: 919px; color: #000; padding: 0 6px 6px; border-radius: 6px; background: linear-gradient(#6d747d 0, #a8adb3 190px, #25303a 195px, #202b35); box-shadow: inset 0 0 0 1px #c3ccd2, 0 5px 16px 5px rgba(0, 0, 0, .7); }
.titlebar { display: flex; justify-content: space-between; height: 28px; margin: 0 -6px; padding: 0 6px 0 7px; border-radius: 6px 6px 0 0; background: linear-gradient(105deg, #59616a 0, #7b8189 10%, #59616b 16%, #202b35 21%, #222d37 35%, #343d47 50%, #242d37 65%, #28323c 78%, #6c747d 91%, #737b83); box-shadow: inset 0 1px #b9c1c7, inset 1px 0 #b9c1c7, inset -1px 0 #b9c1c7; }
.titlebar h1 { font-size: 12px; line-height: 27px; font-weight: 400; text-shadow: 0 0 6px #d5d9dd, 0 0 10px #bbb, 0 0 12px #bbb; }
.close { width: 47px; height: 19px; display: grid; place-items: center; border: 1px solid #d6c0bc; border-top: 0; border-radius: 0 0 4px 4px; background: linear-gradient(#d29b90, #c04a35 45%, #9b1f0c 50%, #d4674c); }
.client { display: flex; padding: 10px 11px 10px 10px; background: #ededed; border: 1px solid #222a32; box-shadow: 0 0 0 1px #aab1b7; }
.cats { width: 125px; border: 1px solid #929292; background: #fff; list-style: none; padding-top: 1px; }
.cats li { height: 18px; margin-bottom: 2px; padding: 1px 0 0 4px; line-height: 18px; }
.cats .on { background: #39f; }
.groups { flex: 1; display: flex; flex-direction: column; gap: 9px; margin: 0 16px 0 8px; }
.grow { display: flex; gap: 8px; }
.first { height: 291px; }
.second { height: 156px; }
fieldset { min-width: 0; margin: 0; padding: 0 8px; border: 1px solid #9c9c9c; }
legend { margin-left: 7px; padding: 0 8px; font-size: 13px; line-height: 16px; }
.mem { flex: 0 0 316px; }
.mrow { display: flex; align-items: center; height: 24px; gap: 8px; }
.mrow > :first-child { width: 145px; text-align: right; }
.mrow b { font-weight: 400; }
.mem legend + .mrow { margin-top: 2px; }
.use { height: 28px; gap: 4px; }
.use input { width: 54px; height: 20px; padding: 0 4px; border: 1px solid #dde; border-top-color: #aaa; background: #fff; }
.unit { margin-left: 4px; }
.slide { display: flex; align-items: center; gap: 9px; height: 18px; margin: 80px 4px 0; }
.bar { position: relative; flex: 1; height: 18px; border: 1px solid #888; background: #fff; }
.bar i { display: block; height: 100%; background: #39f; border-right: 1px solid #888; }
.bar svg { position: absolute; left: 60%; top: 18px; margin-left: -6px; }
.hist { flex: 1; }
.lead { padding-top: 7px; line-height: 14px; }
.presets { display: flex; flex-direction: column; align-items: center; gap: 10px; margin: 10px 0 9px; padding-right: 2px; }
.btn { width: 91px; height: 18px; border: 1px solid #707070; border-radius: 3px; line-height: 16px; background: linear-gradient(#f3f3f3, #eaeaea 48%, #d6d6d6 52%, #d0d0d0); box-shadow: inset 0 0 0 1px #fafafa; }
.ok { border-color: #2c7ba8; background: linear-gradient(#e6f6fd, #d5effb 48%, #b9e3f9 52%, #a9dcf8); box-shadow: inset 0 0 0 1px #36c8f4; }
.hrow { display: flex; align-items: center; height: 23px; margin-bottom: 8px; gap: 8px; }
.hrow label { width: 171px; text-align: right; }
.step { display: flex; width: 69px; height: 23px; border: 1px solid #a0a0a8; }
.step input { width: 46px; padding: 0 4px; border: 0; background: #fff; }
.step button { flex: 1; border-left: 1px solid #a0a0a8; background: url("data:image/svg+xml,%3Csvg xmlns='http://www.w3.org/2000/svg' width='4' height='6'%3E%3Cpath d='M0 0l4 3-4 3z' fill='%235577cc'/%3E%3C/svg%3E") no-repeat center, linear-gradient(#eee, #ccc); }
.hrow select { appearance: none; width: 69px; height: 22px; padding: 0 6px; border: 1px solid #dde; border-top-color: #aaa; background: url("data:image/svg+xml,%3Csvg xmlns='http://www.w3.org/2000/svg' width='8' height='5'%3E%3Cpath d='M0 0h8L4 5z'/%3E%3C/svg%3E") no-repeat right 4px center, #fff; }
.info { display: flex; gap: 9px; margin-left: 3px; line-height: 14px; white-space: nowrap; }
.info svg { margin-top: 9px; }
.scratch { flex: 0 0 366px; padding-right: 5px; }
.disk { display: flex; gap: 3px; padding-top: 6px; margin-left: 2px; }
.tablebox { flex: none; width: 318px; display: grid; grid-template-columns: minmax(0, 1fr) 16px; height: 123px; background: #c5c5c5; border: 1px solid #a5a5a5; border-top: 0; align-items: start; }
table { border-collapse: collapse; table-layout: fixed; width: 318px; margin-left: -1px; }
.c0 { width: 22px; } .c1 { width: 50px; } .c2 { width: 76px; } .c3 { width: 76px; }
th { height: 22px; padding: 0 0 2px 5px; font-weight: 400; text-align: left; border: 1px solid #aaa; background: #ededed; line-height: 16px; }
td { height: 21px; padding: 0 0 1px 4px; background: #fff; border-bottom: 1px solid #999; line-height: 16px; }
td.n { background: #39f; border: 0; font-size: 11px; }
.ck input { display: block; appearance: none; width: 13px; height: 13px; margin: 0 0 0 12px; border: 1px solid #ddd; border-color: #888 #ddd #ddd #888; background: #fff; }
.ck input:checked { background: url("data:image/svg+xml,%3Csvg xmlns='http://www.w3.org/2000/svg' width='11' height='11'%3E%3Cpath d='M1.500 5l3 3.500L10 2' fill='none' stroke='%23222' stroke-width='2.200'/%3E%3C/svg%3E") #fff; }
.sbar { z-index: 1; display: flex; flex-direction: column; align-items: center; justify-content: space-between; height: 99px; margin-top: 23px; padding: 8px 0 6px; background: #f1f1f1; }
.order { display: flex; flex-direction: column; align-items: center; justify-content: center; gap: 9px; width: 28px; height: 74px; margin-top: 25px; border: 3px solid #ff3737; }
.order button { width: 10px; height: 9px; }
.gpu { flex: 1; display: flex; flex-direction: column; align-items: flex-start; }
.gpu p { margin-top: 6px; }
.gpu .card { margin-top: 8px; font-size: 11px; line-height: 13px; }
.usegpu { display: flex; align-items: center; gap: 3px; margin: 33px 0 7px; }
.usegpu input { appearance: none; width: 13px; height: 13px; border: 1px solid #8e8f8f; background: url("data:image/svg+xml,%3Csvg xmlns='http://www.w3.org/2000/svg' width='11' height='11'%3E%3Cpath d='M2 5l3 3.500L9 1.500' fill='none' stroke='%233a52a0' stroke-width='2'/%3E%3C/svg%3E") #e4e6ea; }
.gpu .btn { margin-left: 1px; }
.desc { height: 182px; }
.desc p { padding-top: 6px; }
.desc small { font-size: 10px; }
.actions { display: flex; flex-direction: column; gap: 10px; padding-top: 1px; }
.mark { position: absolute; border: 3px solid #ff3737; }
.outer { left: 140px; top: 332px; width: 378px; height: 168px; }
.arrow { position: absolute; left: 142px; top: 526px; }

.note { position: absolute; left: 402px; top: 870px; color: #ff3535; font-size: 27px; line-height: 34px; font-weight: 300; white-space: nowrap; }
.ball { position: absolute; right: -28px; top: 580px; width: 47px; height: 47px; padding-left: 3px; border: 2px solid #eee; border-radius: 50%; background: #ff8a2c; box-shadow: inset 0 0 0 1px #b5571a, 0 2px 6px #222; color: #fff; font-weight: 700; line-height: 42px; }
.meter { position: absolute; right: 0; top: 792px; width: 17px; height: 65px; padding: 5px 3px; border-radius: 7px; background: #eee; }
.meter i { display: block; height: 55px; border: solid #1a72b5; border-width: 2px 3px; border-radius: 2px; background: repeating-linear-gradient(transparent 0 2px, #1a72b5 2px 4px), linear-gradient(#4b9fd8 32%, #4cf20c 32%); }
.ime { position: absolute; right: 242px; top: 980px; display: flex; align-items: center; gap: 6px; height: 24px; padding: 0 3px 0 0; background: #fff; border: 1px solid #a9bccb; }
.sogou { margin: 0 -1px 0 -23px; }
.wm { position: absolute; right: 14px; top: 949px; display: flex; }
.wm svg { margin-right: -3px; }
.wm strong { display: block; font: 700 31px/36px "Noto Sans CJK SC", sans-serif; color: #2e3182; text-shadow: 0 0 2px #888, 1px 1px 1px #888, -1px -1px 1px #888; }
.wm a { display: block; font: bold 19px/18px "Liberation Mono", monospace; color: #8c3236; text-decoration: none; }
```
